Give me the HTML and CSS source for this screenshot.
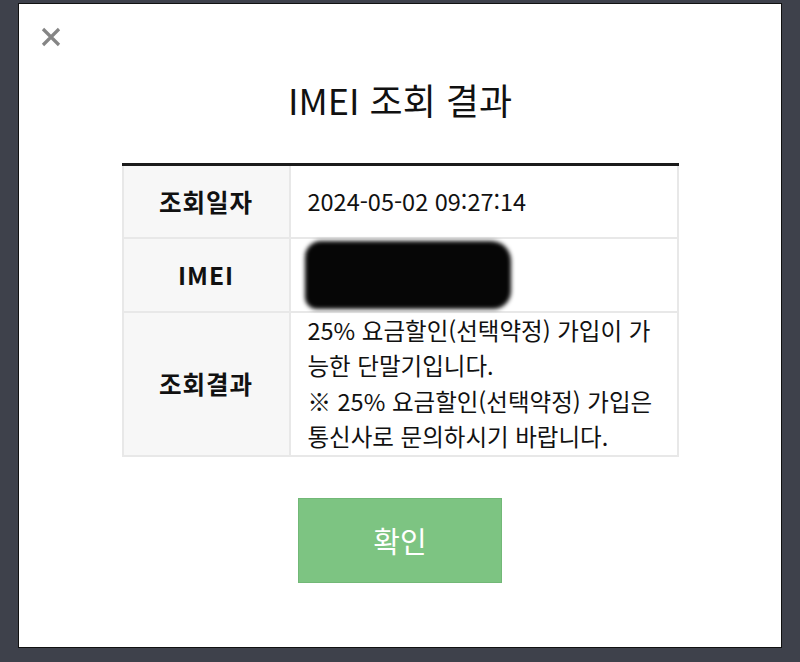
FILE: index.html
```html
<!DOCTYPE html>
<html lang="ko">
<head>
    <meta charset="UTF-8">
    <meta name="viewport" content="width=device-width, initial-scale=1.0">
    <title>IMEI 조회 결과</title>
    <link rel="stylesheet" href="styles.css">
</head>
<body>
    <div class="modal">
        <div class="modal-top">
            <button class="close" aria-label="닫기">
                <svg width="20" height="20" viewBox="0 0 20 20">
                    <path d="M2 2 L18 18 M18 2 L2 18" stroke="#858585" stroke-width="3.2" fill="none"/>
                </svg>
            </button>
        </div>

        <h1 class="title">IMEI 조회 결과</h1>

        <table class="result">
            <tr class="row-date">
                <th>조회일자</th>
                <td>2024-05-02 09:27:14</td>
            </tr>
            <tr class="row-imei">
                <th>IMEI</th>
                <td><span class="redact"></span></td>
            </tr>
            <tr class="row-result">
                <th>조회결과</th>
                <td>25% 요금할인(선택약정) 가입이 가<br>능한 단말기입니다.<br>※ 25% 요금할인(선택약정) 가입은<br>통신사로 문의하시기 바랍니다.</td>
            </tr>
        </table>

        <div class="actions">
            <button class="ok">확인</button>
        </div>
    </div>
</body>
</html>
```
FILE: styles.css
```css
body {
    margin: 0;
    background-color: #3e414b;
    font-family: "Noto Sans CJK KR", "Noto Sans", sans-serif;
    color: #111;
    height: 662px;
    overflow: hidden;
}

.modal {
    margin: 3px 0 0 18px;
    width: 762px;
    height: 643px;
    background-color: #fff;
    border: 1px solid #111;
}

.modal-top {
    padding: 23px 0 0 22px;
    height: 20px;
}

.close {
    display: block;
    padding: 0;
    border: 0;
    background: none;
    width: 20px;
    height: 20px;
    cursor: pointer;
}

.title {
    margin: 26px 0 0;
    text-align: center;
    font-size: 36px;
    font-weight: 400;
    line-height: 52px;
}

.result {
    margin: 38px auto 0;
    width: 557px;
    border-collapse: collapse;
    border-top: 3px solid #1b1b1b;
    font-size: 23.5px;
}

.result th,
.result td {
    border: 2px solid #e8e8e8;
    border-top: 0;
}

.result th {
    width: 163px;
    background-color: #f7f7f7;
    font-size: 24.5px;
    font-weight: 700;
    letter-spacing: 1px;
    text-align: center;
}

.result td {
    padding: 0 8px 0 17px;
    text-align: left;
    line-height: 35.5px;
}

.row-date {
    height: 73px;
}

.row-imei {
    height: 74px;
}

.row-result {
    height: 143px;
}

.redact {
    display: block;
    width: 206px;
    height: 68px;
    margin-left: -3px;
    background-color: #060606;
    border-radius: 16px 20px 18px 12px;
    filter: blur(2px);
}

.actions {
    display: flex;
    justify-content: center;
    margin-top: 41px;
}

.ok {
    width: 204px;
    height: 85px;
    background-color: #7dc482;
    border: 1px solid #72b877;
    color: #fff;
    font-family: inherit;
    font-size: 29px;
    cursor: pointer;
}
```
